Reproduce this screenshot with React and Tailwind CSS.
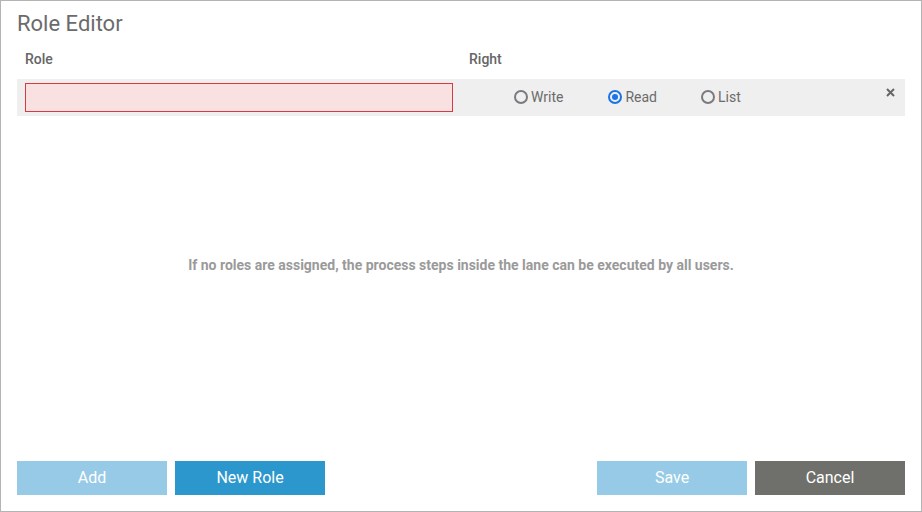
import React from "react";

function Radio({ checked, label }) {
  return (
    <label className="flex items-center gap-[3px] text-[14px] text-[#6b6b6b]">
      {checked ? (
        <span className="w-[14px] h-[14px] rounded-full border-2 border-[#1a73e8] flex items-center justify-center">
          <span className="w-[6px] h-[6px] rounded-full bg-[#1a73e8]" />
        </span>
      ) : (
        <span className="w-[14px] h-[14px] rounded-full border-2 border-[#7a7a80]" />
      )}
      <span>{label}</span>
    </label>
  );
}

export default function App() {
  return (
    <div
      className="w-[922px] h-[512px] border border-[#b4b4b4] bg-white flex flex-col px-[16px]"
      style={{ fontFamily: "Roboto, 'Liberation Sans', sans-serif" }}
    >
      <div className="pt-[9px] text-[22px] leading-[28px] text-[#6b6b6b]">Role Editor</div>
      <div className="flex mt-[12px] h-[18px] items-center text-[14px] font-medium text-[#666]">
        <div className="w-[452px] pl-[8px]">Role</div>
        <div>Right</div>
      </div>
      <div className="mt-[11px] h-[37px] bg-[#efefef] flex items-center pl-[8px] relative">
        <div className="w-[428px] h-[29px] bg-[#f9e1e1] border border-[#d63a43]" />
        <div className="flex items-center ml-[61px] -mt-[1px]">
          <Radio label="Write" />
          <div className="ml-[45px]"><Radio checked label="Read" /></div>
          <div className="ml-[44px]"><Radio label="List" /></div>
        </div>
        <svg className="absolute right-[10px] top-[9px]" width="9" height="9" viewBox="0 0 9 9">
          <path d="M1 1L8 8M8 1L1 8" stroke="#666" strokeWidth="2" />
        </svg>
      </div>
      <div className="flex-1 flex justify-center pt-[140px]">
        <p className="text-[14px] leading-[18px] font-bold text-[#9a9a9a]">
          If no roles are assigned, the process steps inside the lane can be executed by all users.
        </p>
      </div>
      <div className="flex items-center justify-between pb-[16px]">
        <div className="flex gap-[8px]">
          <button className="w-[150px] h-[34px] bg-[#96cae6] text-white text-[16px]">Add</button>
          <button className="w-[150px] h-[34px] bg-[#2b97cd] text-white text-[16px]">New Role</button>
        </div>
        <div className="flex gap-[8px]">
          <button className="w-[150px] h-[34px] bg-[#96cae6] text-white text-[16px]">Save</button>
          <button className="w-[150px] h-[34px] bg-[#6f706c] text-white text-[16px]">Cancel</button>
        </div>
      </div>
    </div>
  );
}
